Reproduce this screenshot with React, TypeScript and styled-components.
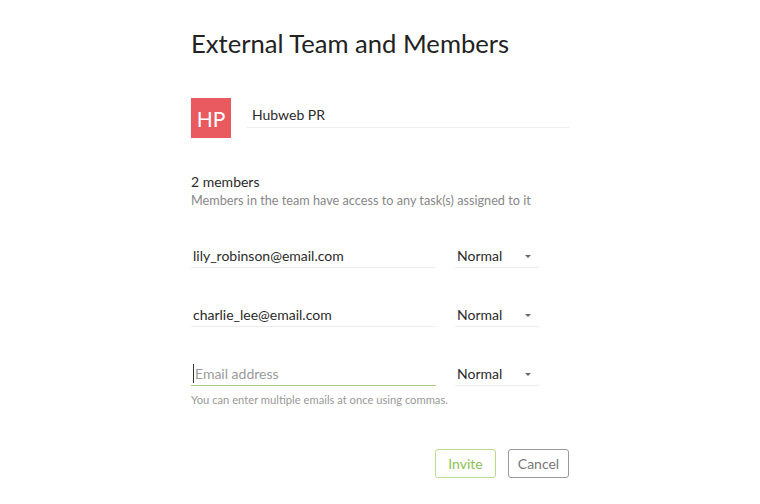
import React from "react";
import styled, { createGlobalStyle } from "styled-components";

const Global = createGlobalStyle`
  html, body { margin: 0; padding: 0; background: #fff; }
  body { font-family: Lato, "Open Sans", sans-serif; color: #333; }
  * { box-sizing: border-box; }
`;

const Page = styled.div`
  width: 378px;
  margin: 0 auto;
  padding-top: 27px;
`;

const Title = styled.h1`
  margin: 0;
  font-size: 25.6px;
  font-weight: 400;
  line-height: 32px;
  color: #222;
`;

const TeamRow = styled.div`
  display: flex;
  align-items: flex-start;
  gap: 16px;
  margin-top: 39px;
`;

const Avatar = styled.div`
  width: 40px;
  height: 40px;
  background: #e85a60;
  color: #fff;
  font-size: 21px;
  display: flex;
  align-items: center;
  justify-content: center;
`;

const NameField = styled.div`
  flex: 1;
  height: 30px;
  padding: 8px 0 0 5px;
  font-size: 14px;
  line-height: 18px;
  color: #2a2a2a;
  border-bottom: 1px solid #eee;
`;

const Info = styled.div`
  margin-top: 35px;
`;

const Count = styled.div`
  font-size: 14px;
  line-height: 18px;
  color: #2a2a2a;
`;

const Sub = styled.div`
  margin-top: 1px;
  font-size: 12.7px;
  line-height: 16px;
  color: #888;
`;

const Rows = styled.div`
  margin-top: 29px;
  display: flex;
  flex-direction: column;
  gap: 28px;
`;

const Row = styled.div`
  display: flex;
  flex-direction: column;
`;

const Line = styled.div`
  display: flex;
  gap: 19px;
`;

const Email = styled.div<{ $focus?: boolean }>`
  width: 245px;
  height: 31px;
  padding: 10px 0 0 2px;
  font-size: 14px;
  line-height: 18px;
  border-bottom: 1px solid ${(p) => (p.$focus ? "#a6cc7d" : "#eee")};
  color: #2a2a2a;
  display: flex;
  align-items: flex-start;
`;

const Placeholder = styled.span`
  color: #9a9a9a;
`;

const Caret = styled.span`
  display: inline-block;
  width: 1px;
  height: 19px;
  background: #333;
  margin-top: -1px;
  margin-right: 1px;
`;

const Select = styled.div`
  width: 84px;
  height: 31px;
  padding: 10px 8px 0 2px;
  font-size: 14px;
  line-height: 18px;
  color: #2a2a2a;
  border-bottom: 1px solid #eee;
  display: flex;
  justify-content: space-between;
  align-items: flex-start;
`;

const Arrow = styled.span`
  width: 0;
  height: 0;
  margin-top: 8px;
  border-left: 3px solid transparent;
  border-right: 3px solid transparent;
  border-top: 3px solid #666;
`;

const Hint = styled.div`
  margin-top: 7px;
  font-size: 11.2px;
  line-height: 14px;
  color: #999;
`;

const Actions = styled.div`
  display: flex;
  justify-content: flex-end;
  gap: 12px;
  margin-top: 42px;
`;

const Button = styled.button<{ $primary?: boolean }>`
  width: 61px;
  height: 29px;
  background: #fff;
  border: 1px solid ${(p) => (p.$primary ? "#b9dc8f" : "#999")};
  color: ${(p) => (p.$primary ? "#8cc152" : "#777")};
  border-radius: 3px;
  font-family: Lato, sans-serif;
  font-size: 14px;
  padding: 0;
`;

const members = ["lily_robinson@email.com", "charlie_lee@email.com"];

export default function App() {
  return (
    <>
      <Global />
      <Page>
        <Title>External Team and Members</Title>
        <TeamRow>
          <Avatar>HP</Avatar>
          <NameField>Hubweb PR</NameField>
        </TeamRow>
        <Info>
          <Count>2 members</Count>
          <Sub>Members in the team have access to any task(s) assigned to it</Sub>
        </Info>
        <Rows>
          {members.map((m) => (
            <Row key={m}>
              <Line>
                <Email>{m}</Email>
                <Select>
                  Normal
                  <Arrow />
                </Select>
              </Line>
            </Row>
          ))}
          <Row>
            <Line>
              <Email $focus>
                <Caret />
                <Placeholder>Email address</Placeholder>
              </Email>
              <Select>
                Normal
                <Arrow />
              </Select>
            </Line>
            <Hint>You can enter multiple emails at once using commas.</Hint>
          </Row>
        </Rows>
        <Actions>
          <Button $primary>Invite</Button>
          <Button>Cancel</Button>
        </Actions>
      </Page>
    </>
  );
}
